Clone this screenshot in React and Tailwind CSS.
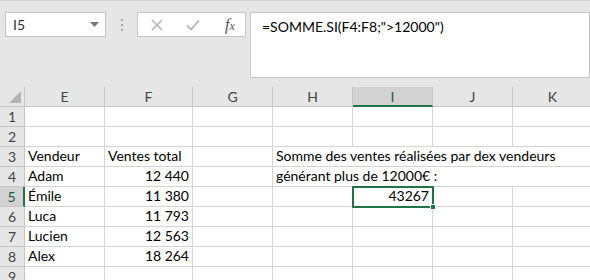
import React from 'react';

const cols = [
  { key: 'E', w: 'w-[80px]' },
  { key: 'F', w: 'w-[88px]' },
  { key: 'G', w: 'w-[80px]' },
  { key: 'H', w: 'w-[80px]' },
  { key: 'I', w: 'w-[80px]' },
  { key: 'J', w: 'w-[80px]' },
  { key: 'K', w: 'w-[80px]' },
];

const rows = [
  { n: 1, cells: {} },
  { n: 2, cells: {} },
  { n: 3, cells: { E: 'Vendeur', F: 'Ventes total' }, note: { text: 'Somme des ventes réalisées par dex vendeurs', span: 4 } },
  { n: 4, cells: { E: 'Adam', F: '12\u202F440' }, note: { text: 'générant plus de 12000€ :', span: 3 } },
  { n: 5, cells: { E: 'Émile', F: '11\u202F380', I: '43267' } },
  { n: 6, cells: { E: 'Luca', F: '11\u202F793' } },
  { n: 7, cells: { E: 'Lucien', F: '12\u202F563' } },
  { n: 8, cells: { E: 'Alex', F: '18\u202F264' } },
  { n: 9, cells: {} },
];

const numeric = (v) => /^[\d\s\u202F]+$/.test(v);

const Cell = ({ w, value, selected }) => (
  <div
    className={`${w} shrink-0 h-full border-r border-b border-[#d4d4d4] flex items-end pb-[1px] ${
      value && numeric(value) ? 'justify-end pr-[3px]' : 'pl-[3px]'
    } ${selected ? 'relative' : ''}`}
  >
    {value && <span className="leading-[18px]">{value}</span>}
    {selected && (
      <div className="absolute -left-[1px] -top-[1px] w-[82px] h-[22px] border-2 border-[#217346] pointer-events-none">
        <div className="absolute -right-[4px] -bottom-[4px] w-[6px] h-[6px] bg-[#217346] border border-white" />
      </div>
    )}
  </div>
);

const Row = ({ row }) => {
  const active = row.n === 5;
  const out = [];
  for (let i = 0; i < cols.length; i++) {
    const c = cols[i];
    if (row.note && c.key === 'H') {
      out.push(
        <div
          key={c.key}
          className="shrink-0 h-full border-b border-[#d4d4d4] flex items-end pb-[1px] pl-[3px] whitespace-nowrap"
          style={{ width: 80 * row.note.span }}
        >
          <span className="leading-[18px]">{row.note.text}</span>
        </div>
      );
      i += row.note.span - 1;
      continue;
    }
    out.push(<Cell key={c.key} w={c.w} value={row.cells[c.key]} selected={active && c.key === 'I'} />);
  }
  return (
    <div className="flex h-[20px]">
      <div
        className={`w-[25px] shrink-0 h-full border-b border-[#c6c6c6] flex items-center justify-center text-[14px] ${
          active ? 'bg-[#d2d2d2] text-[#1e5c3a] border-r-2 border-r-[#217346]' : 'bg-[#e6e6e6] text-[#444] border-r border-r-[#c6c6c6]'
        }`}
      >
        {row.n}
      </div>
      {out}
    </div>
  );
};

const App = () => {
  return (
    <div className="w-[590px] h-[280px] overflow-hidden bg-white text-black text-[14px]" style={{ fontFamily: 'Lato, "Open Sans", sans-serif' }}>
      {/* formula bar area */}
      <div className="h-[87px] bg-[#e6e6e6] border-t border-[#d0d0d0] flex items-start pt-[11px] pl-[5px]">
        <div className="w-[101px] h-[25px] bg-white border border-[#c6c6c6] flex items-center justify-between pl-[7px] pr-[6px]">
          <span className="text-[14px] text-[#333]">I5</span>
          <svg width="9" height="5" viewBox="0 0 9 5">
            <path d="M0 0h9L4.5 5z" fill="#777" />
          </svg>
        </div>
        <div className="w-[31px] h-[25px] flex flex-col items-center justify-center gap-[3px]">
          <span className="w-[2px] h-[2px] bg-[#a8a8a8]" />
          <span className="w-[2px] h-[2px] bg-[#a8a8a8]" />
          <span className="w-[2px] h-[2px] bg-[#a8a8a8]" />
        </div>
        <div className="w-[109px] h-[25px] bg-white border border-[#c6c6c6] flex items-center">
          <svg className="ml-[13px]" width="12" height="12" viewBox="0 0 12 12">
            <path d="M1 1L11 11M11 1L1 11" stroke="#b5b5b5" strokeWidth="1.6" />
          </svg>
          <svg className="ml-[23px]" width="14" height="12" viewBox="0 0 14 12">
            <path d="M1 6.5L5 10.5L13 1.5" stroke="#b5b5b5" strokeWidth="1.8" fill="none" />
          </svg>
          <span
            className="ml-[25px] text-[16px] italic text-[#555]"
            style={{ fontFamily: '"Liberation Serif", serif' }}
          >
            f<span className="text-[12px]">x</span>
          </span>
        </div>
        <div className="ml-[4px] flex-1 h-[66px] bg-white border border-[#c6c6c6] pl-[11px] pt-[3px]">
          <span className="text-[14px] text-black">=SOMME.SI(F4:F8;"&gt;12000")</span>
        </div>
      </div>

      {/* column headers */}
      <div className="flex h-[20px] bg-[#e6e6e6]">
        <div className="w-[25px] shrink-0 h-full border-r border-b border-[#c6c6c6] flex items-end justify-end pr-[3px] pb-[3px]">
          <svg width="12" height="12" viewBox="0 0 12 12">
            <path d="M12 0V12H0z" fill="#b4b4b4" />
          </svg>
        </div>
        {cols.map((c) =>
          c.key === 'I' ? (
            <div
              key={c.key}
              className={`${c.w} shrink-0 h-full bg-[#d2d2d2] border-r border-[#c6c6c6] border-b-2 border-b-[#217346] flex items-center justify-center text-[14px] text-[#1e5c3a]`}
            >
              {c.key}
            </div>
          ) : (
            <div
              key={c.key}
              className={`${c.w} shrink-0 h-full border-r border-b border-[#c6c6c6] flex items-center justify-center text-[14px] text-[#444]`}
            >
              {c.key}
            </div>
          )
        )}
      </div>

      {rows.map((r) => (
        <Row key={r.n} row={r} />
      ))}
    </div>
  );
};

export default App;
